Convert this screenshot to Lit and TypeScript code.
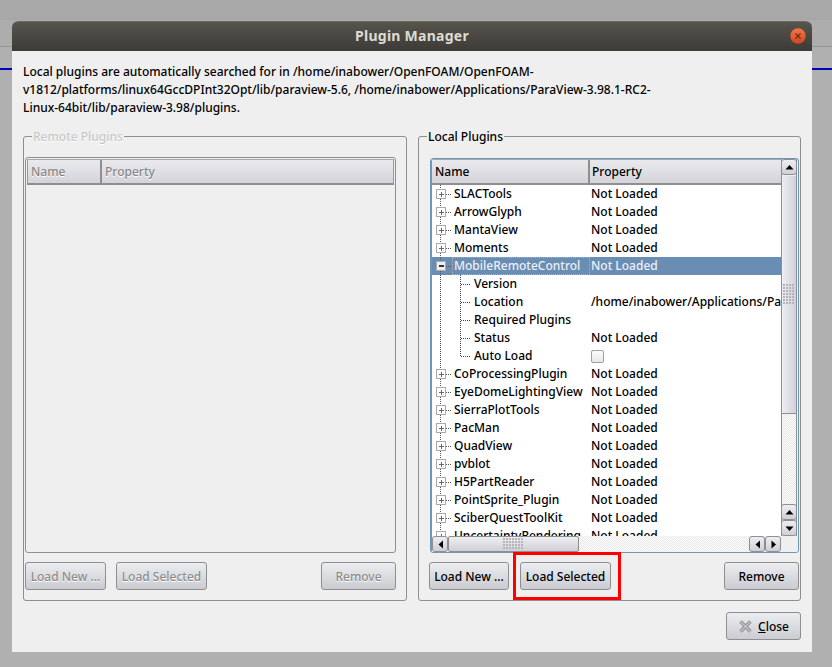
import { LitElement, html, css, svg } from "lit";
import { customElement } from "lit/decorators.js";

const TOP = ["SLACTools", "ArrowGlyph", "MantaView", "Moments"];
const AFTER = ["CoProcessingPlugin", "EyeDomeLightingView", "SierraPlotTools", "PacMan", "QuadView", "pvblot", "H5PartReader", "PointSprite_Plugin", "SciberQuestToolKit", "UncertaintyRendering"];
const KIDS: [string, string][] = [
  ["Version", ""],
  ["Location", "/home/inabower/Applications/ParaView-3.98.1-RC2-Linux-64bit/lib/paraview-3.98/plugins"],
  ["Required Plugins", ""],
  ["Status", "Not Loaded"],
  ["Auto Load", "check"],
];

const expander = (open: boolean) => svg`
  <svg class="guide" width="43" height="18" viewBox="1 0 43 18" shape-rendering="crispEdges">
    <path d="M9.5 0V4M9.5 14V18M15 9.5H20" stroke="#555" stroke-dasharray="1 1" fill="none"/>
    <rect x="5.5" y="4.5" width="9" height="9" fill="${open ? "#eef0f4" : "#fff"}" stroke="#aaa"/>
    <path d="M7.5 9H13" stroke="${open ? "#333" : "#666"}" stroke-width="${open ? 2 : 1}" />
    ${open ? "" : svg`<path d="M10.5 6.5V11.5" stroke="#666"/>`}
  </svg>`;

const childGuide = (last: boolean) => svg`
  <svg class="guide" width="43" height="18" viewBox="1 0 43 18" shape-rendering="crispEdges">
    <path d="M9.5 0V18M29.5 0V${last ? 9 : 18}M30 9.5H40" stroke="#444" stroke-dasharray="1 1" fill="none"/>
  </svg>`;

@customElement("app-root")
export class AppRoot extends LitElement {
  static styles = css`
    :host {
      display: block; position: relative; width: 832px; height: 667px; box-sizing: border-box;
      padding: 21px 20px 15px 12px; overflow: hidden; background: #b0b0b0;
      font: 500 12px/18px "Noto Sans", sans-serif; color: #000;
    }
    .topstrip { position: absolute; left: 0; right: 0; top: 0; height: 20px; background: #a8a8a8; }
    .strip { position: absolute; left: 0; right: 0; top: 20px; height: 26px; background: #adadad; border-bottom: 1px solid #949494; }
    .blue { position: absolute; left: 0; right: 0; top: 68px; height: 2px; background: #0000b8; }
    .win { position: relative; height: 631px; display: flex; flex-direction: column; background: #efefef; border-radius: 6px 6px 0 0; }
    .title { height: 30px; flex: none; display: flex; align-items: center; justify-content: center; position: relative; padding-bottom: 2px;
      background: linear-gradient(#57544c, #3c3b37); border-radius: 6px 6px 0 0; border-top: 1px solid #6a675f; box-sizing: border-box;
      color: #dfdbd2; font-weight: 700; font-size: 14px; letter-spacing: 0.25px; }
    .x { position: absolute; right: 6px; top: 6px; width: 16px; height: 16px; }
    .content { flex: 1; display: flex; flex-direction: column; padding: 12px 11px 12px; }
    .intro { margin: 0; height: 54px; width: 640px; }
    .groups { display: grid; grid-template-columns: 384px 383px; column-gap: 11px; margin-top: 10px; height: 474px; }
    fieldset { margin: 0; min-width: 0; border: 1px solid #8e8e8e; border-radius: 3px; display: flex; flex-direction: column; box-sizing: border-box; height: 474px; }
    legend { padding: 0 1px; line-height: 20px; height: 18px; }
    .remote legend { margin-left: 7px; }
    .local legend { margin-left: -3px; }
    .remote { padding: 1px 10px 10px 1px; }
    .local { padding: 1px 1px 10px 11px; }
    .remote legend { color: #c8c8c8; text-shadow: 0 1px 0 #fff; }
    .tree { box-sizing: border-box; border-radius: 3px; flex: none; overflow: hidden; }
    .remote .tree { border: 1px solid #8f8f8f; padding: 1px; margin-top: 11px; height: 396px; }
    .local .tree { border: 1px solid #6e98bb; padding-right: 1px; margin-top: 12px; display: grid; grid-template-columns: 1fr 16px; grid-template-rows: 1fr 16px; height: 395px; }
    .main { min-width: 0; min-height: 0; overflow: hidden; background: #fff; border-left: 1px solid #8f8f8f; }
    .remote .main { background: transparent; border: 0; height: 100%; }
    .head { display: flex; height: 26px; box-sizing: border-box; background: linear-gradient(#eaeaee, #d3d4da); border-bottom: 2px solid #8f8f8f; border-top: 1px solid #a8a8a8; }
    .remote .head { color: #888; text-shadow: 0 1px 0 #fff; border-left: 1px solid #999; border-right: 1px solid #999; }
    .hname { width: 156px; flex: none; box-sizing: border-box; padding-left: 3px; line-height: 24px; }
    .remote .hname { width: 72px; }
    .hprop { flex: 1; border-left: 2px solid #8f8f8f; padding-left: 2px; line-height: 24px; }
    .remote .hprop { padding-left: 3px; }
    .row { display: flex; height: 18px; align-items: center; white-space: nowrap; position: relative; }
    .guide { flex: none; display: block; }
    .row .nm { flex: none; height: 18px; margin-left: -21px; width: 136px; box-sizing: border-box; }
    .row.child .nm { margin-left: -1px; width: 116px; }
    .row .val { margin-left: 1px; }
    .row.sel { background: #6a8db3; color: #eaf0f8; }
    .row.sel .nm { outline: 1px dotted #c9a98a; outline-offset: -1px; padding-left: 2px; margin-left: -23px; width: 138px; }
    .check { width: 11px; height: 11px; display: block; border: 1px solid #a0a0a0; border-radius: 2px; background: linear-gradient(#fbfbfb, #e8e8e8); }
    .vbar { grid-column: 2; grid-row: 1; display: flex; flex-direction: column; min-height: 0; border-left: 1px solid #8f8f8f; border-right: 1px solid #8f8f8f; box-sizing: border-box; }
    .hbar { grid-column: 1; grid-row: 2; display: flex; min-width: 0; border-left: 1px solid #8f8f8f; box-sizing: border-box; }
    .corner { grid-column: 2; grid-row: 2; background: #efefef; }
    .trough { flex: 1; background: repeating-conic-gradient(#e6e6e6 0 25%, #fff 0 50%) 0 0 / 2px 2px; }
    .sb { flex: none; display: flex; align-items: center; justify-content: center; box-sizing: border-box; background: linear-gradient(#eeeef2, #cfd0d6); border: 1px solid #8f8f8f; border-radius: 3px; }
    .vbar .sb { width: 16px; height: 16px; margin-left: -1px; margin-right: -1px; }
    .hbar .sb { width: 16px; height: 16px; }
    .vthumb { flex: none; height: 238px; box-sizing: border-box; background: linear-gradient(90deg, #eeeef3, #cfd0da); border-bottom: 1px solid #8f8f8f; display: flex; align-items: center; justify-content: center; margin-top: 1px; }
    .hthumb { flex: none; width: 131px; box-sizing: border-box; background: linear-gradient(#eeeef2, #cfd0d6); border: 1px solid #8f8f8f; border-radius: 2px; display: flex; align-items: center; justify-content: center; }
    .grip { display: block; background: radial-gradient(circle at 1px 1px, #b4b4ba 1px, transparent 1.2px) 0 0 / 3px 3px; }
    .vthumb .grip { width: 12px; height: 21px; }
    .hthumb .grip { width: 21px; height: 12px; }
    .btns { display: flex; margin-top: 9px; height: 28px; flex: none; }
    .local .btns { margin-left: -1px; }
    .btn { box-sizing: border-box; height: 28px; padding-top: 2px; border: 1px solid #8f8f8f; border-radius: 3px; background: linear-gradient(#ecedf0, #cbccd2); display: flex; align-items: center; justify-content: center; }
    .remote .btn { color: #8c8c8c; text-shadow: 0 1px 0 #fff; }
    .b1 { width: 81px; }
    .b2 { width: 91px; margin-left: 10px; position: relative; }
    .b3 { width: 75px; margin-left: auto; }
    .local .b1 { width: 80px; }
    .local .b2 { margin-left: 11px; }
    .mark { position: absolute; left: -8px; top: -11px; width: 108px; height: 48px; box-sizing: border-box; border: 3px solid #ff0000; pointer-events: none; }
    .footer { display: flex; justify-content: flex-end; margin-top: 11px; }
    .close { width: 75px; gap: 5px; }
    .close svg { margin-top: -2px; }
    u { text-decoration-thickness: 1px; }
  `;

  private rows() {
    return html`
      ${TOP.map((n) => html`<div class="row">${expander(false)}<span class="nm">${n}</span><span class="val">Not Loaded</span></div>`)}
      <div class="row sel">${expander(true)}<span class="nm">MobileRemoteControl</span><span class="val">Not Loaded</span></div>
      ${KIDS.map(([n, v], i) => html`<div class="row child">${childGuide(i === KIDS.length - 1)}<span class="nm">${n}</span><span class="val">${v === "check" ? html`<span class="check"></span>` : v}</span></div>`)}
      ${AFTER.map((n) => html`<div class="row">${expander(false)}<span class="nm">${n}</span><span class="val">Not Loaded</span></div>`)}
    `;
  }

  private arrow(d: string) {
    return html`<svg width="9" height="9" viewBox="0 0 9 9"><path d="${d}" fill="#000"/></svg>`;
  }

  render() {
    return html`
      <div class="topstrip"></div><div class="strip"></div><div class="blue"></div>
      <div class="win">
        <div class="title">Plugin Manager
          <svg class="x" viewBox="0 0 17 17"><defs><linearGradient id="g" x1="0" y1="0" x2="0" y2="1"><stop offset="0" stop-color="#f2784a"/><stop offset="1" stop-color="#d3451b"/></linearGradient></defs><circle cx="8.5" cy="8.5" r="8.2" fill="url(#g)"/><path d="M5.8 5.8L11.2 11.2M11.2 5.8L5.8 11.2" stroke="#5a2a18" stroke-width="1.2"/></svg>
        </div>
        <div class="content">
          <p class="intro">Local plugins are automatically searched for in /home/inabower/OpenFOAM/OpenFOAM-v1812/platforms/linux64GccDPInt32Opt/lib/paraview-5.6, /home/inabower/Applications/ParaView-3.98.1-RC2-Linux-64bit/lib/paraview-3.98/plugins.</p>
          <div class="groups">
            <fieldset class="remote">
              <legend>Remote Plugins</legend>
              <div class="tree"><div class="main">
                <div class="head"><div class="hname">Name</div><div class="hprop">Property</div></div>
              </div></div>
              <div class="btns"><div class="btn b1">Load New ...</div><div class="btn b2">Load Selected</div><div class="btn b3">Remove</div></div>
            </fieldset>
            <fieldset class="local">
              <legend>Local Plugins</legend>
              <div class="tree">
                <div class="main">
                  <div class="head"><div class="hname">Name</div><div class="hprop">Property</div></div>
                  ${this.rows()}
                </div>
                <div class="vbar">
                  <div class="sb">${this.arrow("M4.5 2L8.5 6.5H0.5Z")}</div>
                  <div class="vthumb"><span class="grip"></span></div>
                  <div class="trough"></div>
                  <div class="sb">${this.arrow("M4.5 2L8.5 6.5H0.5Z")}</div>
                  <div class="sb">${this.arrow("M4.5 7L8.5 2.5H0.5Z")}</div>
                </div>
                <div class="hbar">
                  <div class="sb">${this.arrow("M2.5 4.5L7 0.5V8.5Z")}</div>
                  <div class="hthumb"><span class="grip"></span></div>
                  <div class="trough"></div>
                  <div class="sb">${this.arrow("M2.5 4.5L7 0.5V8.5Z")}</div>
                  <div class="sb">${this.arrow("M7 4.5L2.5 0.5V8.5Z")}</div>
                </div>
                <div class="corner"></div>
              </div>
              <div class="btns"><div class="btn b1">Load New ...</div><div class="btn b2">Load Selected<span class="mark"></span></div><div class="btn b3">Remove</div></div>
            </fieldset>
          </div>
          <div class="footer">
            <div class="btn close">
              <svg width="15" height="13" viewBox="0 0 15 13"><path d="M2.5 1.5L12.5 11.5M12.5 1.5L2.5 11.5" stroke="#8d8d8d" stroke-width="3.4"/><path d="M2.5 1.5L12.5 11.5M12.5 1.5L2.5 11.5" stroke="#c9c9c9" stroke-width="1.2"/></svg>
              <span><u>C</u>lose</span>
            </div>
          </div>
        </div>
      </div>
    `;
  }
}
